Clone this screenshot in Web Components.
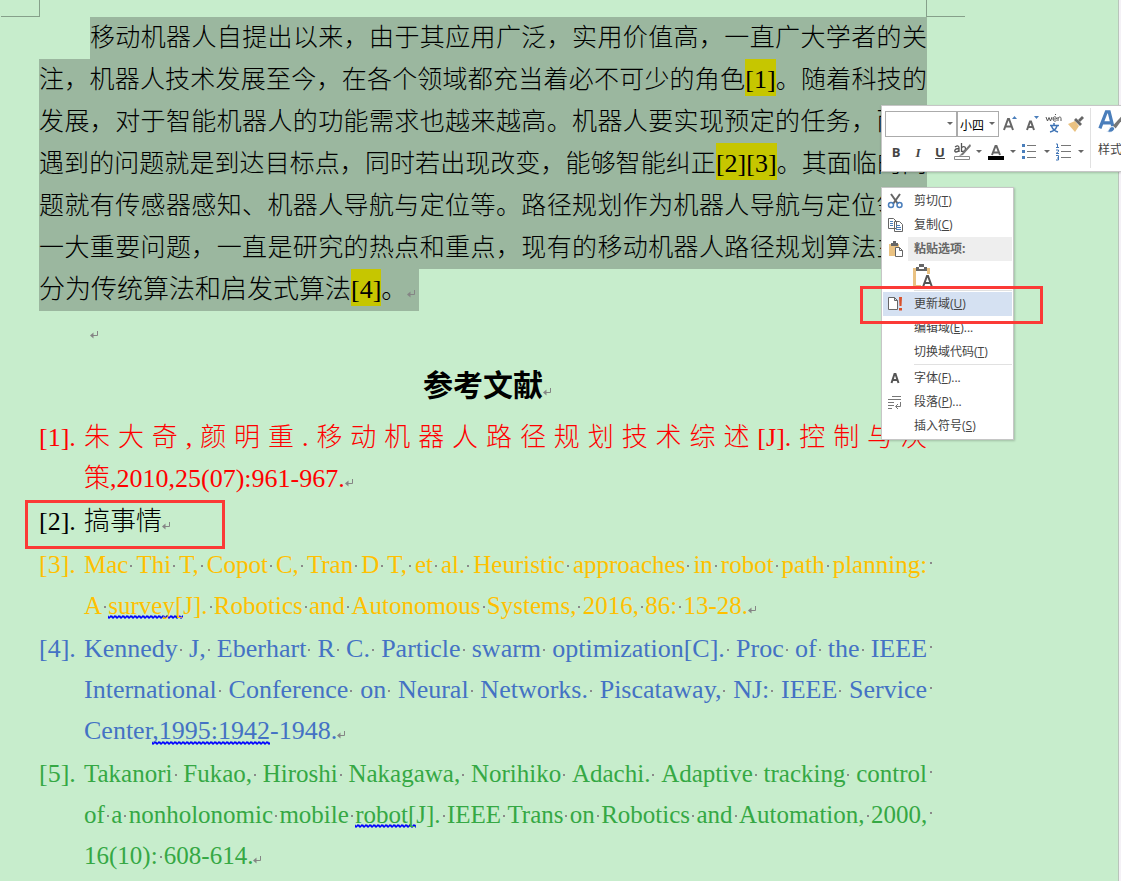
<!DOCTYPE html>
<html lang="zh-CN">
<head>
<meta charset="utf-8">
<title>参考文献</title>
<style>
  * { box-sizing: border-box; }
  html, body { margin: 0; min-height: 100%; }
  body { background: #f4f1f6; overflow: hidden; }
  doc-page { --cjk: "Noto Sans CJK SC", sans-serif; }
  doc-page, mini-toolbar, context-menu { font-family: "Liberation Serif", "Noto Sans CJK SC", serif; }
</style>
</head>
<body>
<doc-page>
  <selected-text></selected-text>
  <blank-line></blank-line>
  <doc-heading>参考文献</doc-heading>
  <reference-list></reference-list>
</doc-page>
<mini-toolbar></mini-toolbar>
<context-menu></context-menu>
<red-frame style="--x:860px; --y:286px; --w:183px; --h:38px"></red-frame>
<red-frame style="--x:25px; --y:500px; --w:200px; --h:49px"></red-frame>

<script>
const RETURN = '<svg class="ret" width="8" height="9" viewBox="0 0 8 9" aria-hidden="true"><path d="M7.5 1v4.5H2" fill="none" stroke="#858585"/><path d="M0 5.5 3.5 2.5v6z" fill="#858585"/></svg>';

class DocPage extends HTMLElement {
  constructor() {
    super();
    this.attachShadow({ mode: 'open' }).innerHTML = `
      <style>
        :host { display: block; min-height: 100vh; background: #c7edcc; border-right: 1px solid #b9c4bb; margin-right: 2px; padding: 0 191px 0 39px; }
        .margins { display: flex; justify-content: space-between; height: 17px; margin: 0 -38px; }
        .margins i { width: 38px; border-bottom: 1px solid #86a08a; border-right: 1px solid #86a08a; }
        .margins i:last-child { border-right: 0; border-left: 1px solid #86a08a; }
      </style>
      <div class="margins"><i></i><i></i></div>
      <slot></slot>`;
  }
}

class SelectedText extends HTMLElement {
  constructor() {
    super();
    const lines = [
      '移动机器人自提出以来，由于其应用广泛，实用价值高，一直广大学者的关',
      '注，机器人技术发展至今，在各个领域都充当着必不可少的角色[1]。随着科技的',
      '发展，对于智能机器人的功能需求也越来越高。机器人要实现预定的任务，而所',
      '遇到的问题就是到达目标点，同时若出现改变，能够智能纠正[2][3]。其面临的问',
      '题就有传感器感知、机器人导航与定位等。路径规划作为机器人导航与定位领域',
      '一大重要问题，一直是研究的热点和重点，现有的移动机器人路径规划算法主要',
      '分为传统算法和启发式算法[4]。'
    ];
    const mark = s => s.replace(/((?:\[\d\])+)/g, '<mark>$1</mark>');
    this.attachShadow({ mode: 'open' }).innerHTML = `
      <style>
        :host { display: block; }
        p { margin: 0; font-size: 25px; line-height: 42px; font-weight: 300; color: #000; }
        span { display: block; height: 42px; background: #9bb79f; text-align: justify; text-align-last: justify; white-space: nowrap; }
        span:first-child { margin-left: 51px; }
        span:last-child { width: fit-content; padding-right: 4px; text-align-last: left; font-size: 26px; }
        mark { display: inline-block; height: 37px; vertical-align: top; background: #c6c600; color: #000; font-size: 26px; }
      </style>
      <p>${lines.map((l, i) => `<span>${mark(l)}${i === lines.length - 1 ? RETURN : ''}</span>`).join('')}</p>`;
  }
}

class BlankLine extends HTMLElement {
  constructor() {
    super();
    this.attachShadow({ mode: 'open' }).innerHTML = `
      <style>
        :host { display: flex; align-items: center; height: 46px; padding-left: 51px; }
      </style>
      ${RETURN}`;
  }
}

class DocHeading extends HTMLElement {
  constructor() {
    super();
    this.attachShadow({ mode: 'open' }).innerHTML = `
      <style>
        :host { display: block; }
        h1 { margin: 0; padding: 0 0 7px 8px; font: bold 30px/53px var(--cjk); text-align: center; color: #000; }
      </style>
      <h1><slot></slot>${RETURN}</h1>`;
  }
}

class ReferenceList extends HTMLElement {
  constructor() {
    super();
    const refs = [
      ['#ff0000', ['朱大奇,颜明重.移动机器人路径规划技术综述[J].控制与决', '策,2010,25(07):961-967.']],
      ['#000000', ['搞事情']],
      ['#ffc000', ['Mac Thi T, Copot C, Tran D T, et al. Heuristic approaches in robot path planning: ', 'A {survey[}J]. Robotics and Autonomous Systems, 2016, 86: 13-28.'], 'tight'],
      ['#4472c4', ['Kennedy J, Eberhart R C. Particle swarm optimization[C]. Proc of the IEEE ', 'International Conference on Neural Networks. Piscataway, NJ: IEEE Service ', 'Center{,1995:1942}-1948.']],
      ['#35a844', ['Takanori Fukao, Hiroshi Nakagawa, Norihiko Adachi. Adaptive tracking control ', 'of a nonholonomic mobile {robot[}J]. IEEE Trans on Robotics and Automation, 2000, ', '16(10): 608-614.'], 'tight']
    ];
    const line = (text, last) => {
      const html = text.trimEnd()
        .replace(/ /g, '<i> </i>')
        .replace('{', '<u>').replace('}', '</u>');
      const cls = [last ? 'last' : '', text.endsWith(' ') ? 'sp' : ''].join(' ').trim();
      return `<span class="${cls}">${html}${last ? RETURN : ''}</span>`;
    };
    this.attachShadow({ mode: 'open' }).innerHTML = `
      <style>
        :host { display: block; }
        ol { display: grid; gap: 2px; margin: 0; padding: 0; list-style: none; font-size: 26px; line-height: 41px; font-weight: 300; }
        li { display: grid; grid-template-columns: 45px minmax(0, 1fr); color: var(--ink); }
        .tight { font-size: 25px; }
        span { display: block; position: relative; height: 41px; text-align: justify; text-align-last: justify; white-space: nowrap; }
        .last { text-align-last: left; }
        i { background: linear-gradient(#8a8a8a, #8a8a8a) 2px 55% / 2px 2px no-repeat; }
        .sp::after { content: ""; position: absolute; left: 100%; top: 18px; margin-left: 3px; width: 2px; height: 2px; background: #8a8a8a; }
        u { text-decoration: none; background: url("data:image/svg+xml,%3Csvg xmlns='http://www.w3.org/2000/svg' width='4' height='4'%3E%3Cpath d='M-1 0 1 3 3 1 5 3' fill='none' stroke='%230000ff' stroke-width='1.5'/%3E%3C/svg%3E") left bottom repeat-x; }
      </style>
      <ol>${refs.map(([ink, lines, fit = ''], i) => `
        <li style="--ink:${ink}"><b style="font-weight:300">[${i + 1}].</b><div class="${fit}">${lines.map((l, n) => line(l, n === lines.length - 1)).join('')}</div></li>`).join('')}
      </ol>`;
  }
}

class MiniToolbar extends HTMLElement {
  constructor() {
    super();
    this.attachShadow({ mode: 'open' }).innerHTML = `
      <style>
        :host { position: absolute; left: 881px; right: 0; top: 105px; height: 67px; overflow: hidden; display: flex; background: #fff; border: 1px solid #c6c6c6; border-right: 0; box-shadow: 0 1px 2px rgba(0,0,0,.2); color: #444; font-family: "Noto Sans CJK SC", sans-serif; }
        .rows { flex: none; width: 205px; display: grid; grid-template-rows: 26px 26px; row-gap: 2px; padding: 5px 0 0 3px; }
        .row { display: flex; align-items: center; }
        select { appearance: none; height: 26px; margin: 0; padding: 0 0 0 2px; border: 1px solid #ababab; border-radius: 0; background: #fff; color: #000; font: 12px "Noto Sans CJK SC", sans-serif; }
        .drop { position: relative; display: flex; }
        .drop::after { content: ""; position: absolute; right: 4px; top: 11px; border: 3px solid transparent; border-top-color: #666; }
        .face select { width: 72px; }
        .size select { width: 42px; }
        button { display: flex; align-items: center; justify-content: center; margin: 0; padding: 0; border: 0; background: none; width: 22px; height: 26px; color: #444; font: 13px "Open Sans", sans-serif; }
        .wide { width: 34px; }
        .styles { flex: none; width: 36px; height: 60px; margin-top: 2px; padding: 0 0 0 7px; border-left: 1px solid #e1e1e1; flex-direction: column; align-items: flex-start; justify-content: flex-start; font: 12px/18px "Noto Sans CJK SC", sans-serif; white-space: nowrap; }
        .styles svg { margin: 1px 0 6px; flex: none; }
      </style>
      <div class="rows">
        <div class="row">
          <label class="drop face"><select aria-label="字体"><option></option></select></label>
          <label class="drop size"><select aria-label="字号"><option>小四</option></select></label>
          <button aria-label="增大字号"><svg width="18" height="20" viewBox="0 0 18 20"><path d="m3 16 4-11h1l4 11M4.500 12.500h6" fill="none" stroke="#666" stroke-width="2"/><path d="m11 5 2.500-3L16 5z" fill="#4a7ebb"/></svg></button>
          <button aria-label="减小字号"><svg width="18" height="20" viewBox="0 0 18 20"><path d="m4 16 3-8.500h1L11 16M5 13h5" fill="none" stroke="#666" stroke-width="2"/><path d="m11 2 2.500 3L16 2z" fill="#4a7ebb"/></svg></button>
          <button aria-label="拼音指南"><svg width="18" height="22" viewBox="0 0 18 22"><g fill="none" stroke="#555"><path d="m1 4 1.500 4L4 4.500 5.500 8 7 4M8 6h3.500c0-3-3.500-3-3.500 0 0 2.500 2.500 2.500 3.500 1.500M10 2l1-1M13 8V4m0 1.500c1-2 3-2 3 0V8"/></g><path d="M9 10v2M5 12.500h9M6.500 13c1 3 3 5 6.500 6M12 13c-1 3-3 5-7 6" fill="none" stroke="#3f74b5" stroke-width="1.500"/></svg></button>
          <button aria-label="格式刷"><svg width="18" height="18" viewBox="0 0 18 18"><path d="m1 9 7-3 4 5-4 6z" fill="#eac282"/><path d="m7 5 2-2 6 6-2 2z" fill="#666"/><path d="m11 5 4-4 2 2-4 4z" fill="#666"/></svg></button>
        </div>
        <div class="row">
          <button aria-label="加粗"><b>B</b></button>
          <button aria-label="倾斜"><b><em style="font-family:'Liberation Serif'">I</em></b></button>
          <button aria-label="下划线"><b><u>U</u></b></button>
          <button class="wide" aria-label="突出显示"><svg width="30" height="20" viewBox="0 0 30 20"><path d="M2 5c3-2 4-1 4 1v4M6 6.500c-5 0-5 3.500-3 3.500 1 0 2-.5 3-1.500M8.500 1v9m0-4c1-2 4-2 4 .5S10 10 8.500 9" fill="none" stroke="#555" stroke-width="1.300"/><path d="m17 2-8 9-3 3 4-1 8-9z" fill="#777"/><path d="M1.500 14.500h15v3h-15z" fill="#fff" stroke="#888"/><path d="M23 8h6l-3 3z" fill="#666"/></svg></button>
          <button class="wide" aria-label="字体颜色"><svg width="30" height="20" viewBox="0 0 30 20"><path d="m5 13 3.500-9h1l3.500 9M6 10.500h6" fill="none" stroke="#666" stroke-width="2"/><path d="M1 14h16v4H1z"/><path d="M23 8h6l-3 3z" fill="#666"/></svg></button>
          <button class="wide" aria-label="项目符号"><svg width="30" height="20" viewBox="0 0 30 20"><path d="M6 3.500h9M6 9.500h9M6 15.500h9" stroke="#777"/><path d="M1 2h3v3H1zM1 8h3v3H1zM1 14h3v3H1z" fill="#4a7ebb"/><path d="M23 8h6l-3 3z" fill="#666"/></svg></button>
          <button class="wide" aria-label="编号"><svg width="30" height="20" viewBox="0 0 30 20"><path d="M6 3.500h10M6 9.500h10M6 15.500h10" stroke="#777"/><path d="M1 2h1.500v3M1 5.500h3M1 8h2.500v1.500L1 11.500h3M1 13.500h2.500V18H1m1-2h1.500" fill="none" stroke="#3f74b5"/><path d="M23 8h6l-3 3z" fill="#666"/></svg></button>
        </div>
      </div>
      <button class="styles"><svg width="26" height="25" viewBox="0 0 28 27"><path d="m2 21 7-18h3l4 16M5 15h10" fill="none" stroke="#4a7ebb" stroke-width="3.500"/><path d="m16 18 10-11 2 2-9 12z" fill="#777"/><path d="M9 24c4 0 2-5 6-5 3 0 4 3 1 5-2 2-5 1-7 0z" fill="#4a7ebb" stroke="#fff"/></svg>样式</button>`;
  }
}

const ICONS = {
  cut: '<path d="m4 1 7 10M13 1 6 11" stroke="#666" stroke-width="2"/><g fill="none" stroke="#4a7ebb" stroke-width="1.500"><circle cx="4" cy="12" r="2.500"/><circle cx="12.500" cy="12" r="2.500"/></g>',
  copy: '<path d="M1.500 1.500h5l3 3v7h-8zM7.500 4.500h5l3 3v7h-8z" fill="#fff" stroke="#666"/><path d="M3 4.500h3M3 6.500h3M3 8.500h3M9 8.500h4M9 10.500h5M9 12.500h5" stroke="#4a7ebb"/>',
  paste: '<path d="M2 3h10v12H2z" fill="#eac282"/><path d="M4 2h2V0h3v2h2v3H4z" fill="#666"/><path d="M8.500 6.500h4l3 3v6h-7z" fill="#fff" stroke="#666"/><path d="M12.500 6.500v3h3" fill="none" stroke="#666"/>',
  update: '<path d="M1.500 1.500h6l3 3v9h-9zM7.500 1.500v3h3" fill="#fff" stroke="#666"/><path d="M12 1h3l-.5 9h-2zM12 12h3v2.500h-3z" fill="#d9512c"/>',
  font: '<path d="m4.500 13 3-9h1l3 9M5.500 10h5" fill="none" stroke="#555" stroke-width="2"/>',
  para: '<path d="M5 2.500h9M1 5.500h13M1 8.500h6M1 11.500h6M1 14.500h4M13.500 8v4.500H9M11 10l-2.500 2.500L11 15" fill="none" stroke="#777"/>'
};

class MenuItem extends HTMLElement {
  connectedCallback() {
    const icon = ICONS[this.getAttribute('icon')] || '';
    this.attachShadow({ mode: 'open' }).innerHTML = `
      <style>
        :host { display: block; height: 24px; }
        button { display: flex; align-items: center; width: 100%; height: 24px; margin: 0; padding: 0 0 0 4px; border: 0; background: none; color: #444; font: 12px/24px "Open Sans", "Noto Sans CJK SC", sans-serif; text-align: left; white-space: nowrap; }
        svg { flex: none; width: 17px; height: 17px; margin-right: 10px; }
        :host([active]) button { background: #d5e1f2; }
        :host([title-row]) button { background: linear-gradient(#eee, #eee) 25px 0 no-repeat; font-weight: bold; color: #666; }
      </style>
      <button role="menuitem"><svg viewBox="0 0 17 17">${icon}</svg><span><slot></slot></span></button>`;
  }
}

class ContextMenu extends HTMLElement {
  constructor() {
    super();
    this.attachShadow({ mode: 'open' }).innerHTML = `
      <style>
        :host { position: absolute; left: 881px; top: 187px; width: 133px; display: block; padding: 1px; background: #fff; border: 1px solid #c6c6c6; box-shadow: 1px 1px 2px rgba(0,0,0,.2); }
        .option { display: flex; align-items: center; margin: 0 0 0 28px; padding: 0; border: 0; background: none; height: 29px; }
        hr { margin: 0 0 1px 31px; border: 0; border-top: 1px solid #e1e1e1; }
      </style>
      <menu-item icon="cut">剪切(<u>T</u>)</menu-item>
      <menu-item icon="copy">复制(<u>C</u>)</menu-item>
      <menu-item icon="paste" title-row>粘贴选项:</menu-item>
      <button class="option" aria-label="只保留文本"><svg width="24" height="26" viewBox="0 0 24 26"><path d="M2 5h17v19H2z" fill="#eac282"/><path d="M5 7h11v15H5z" fill="#fff"/><path d="M5 4h3V1h5v3h3v4H5z" fill="#666"/><path d="M8 4h5v2H8z" fill="#fff"/><path d="M10 11h14v15H10z" fill="#fff"/><path d="m12 24 4-11h1l4 11M13.500 20h6" fill="none" stroke="#555" stroke-width="2"/></svg></button>
      <hr>
      <menu-item icon="update" active>更新域(<u>U</u>)</menu-item>
      <menu-item>编辑域(<u>E</u>)...</menu-item>
      <menu-item>切换域代码(<u>T</u>)</menu-item>
      <hr>
      <menu-item icon="font">字体(<u>F</u>)...</menu-item>
      <menu-item icon="para">段落(<u>P</u>)...</menu-item>
      <menu-item>插入符号(<u>S</u>)</menu-item>`;
  }
}

// annotation box laid over the page
class RedFrame extends HTMLElement {
  constructor() {
    super();
    this.attachShadow({ mode: 'open' }).innerHTML = `
      <style>
        :host { position: absolute; left: var(--x); top: var(--y); width: var(--w); height: var(--h); border: 3px solid #fb3a36; pointer-events: none; }
      </style>`;
  }
}

customElements.define('doc-page', DocPage);
customElements.define('selected-text', SelectedText);
customElements.define('blank-line', BlankLine);
customElements.define('doc-heading', DocHeading);
customElements.define('reference-list', ReferenceList);
customElements.define('mini-toolbar', MiniToolbar);
customElements.define('menu-item', MenuItem);
customElements.define('context-menu', ContextMenu);
customElements.define('red-frame', RedFrame);
</script>
</body>
</html>
